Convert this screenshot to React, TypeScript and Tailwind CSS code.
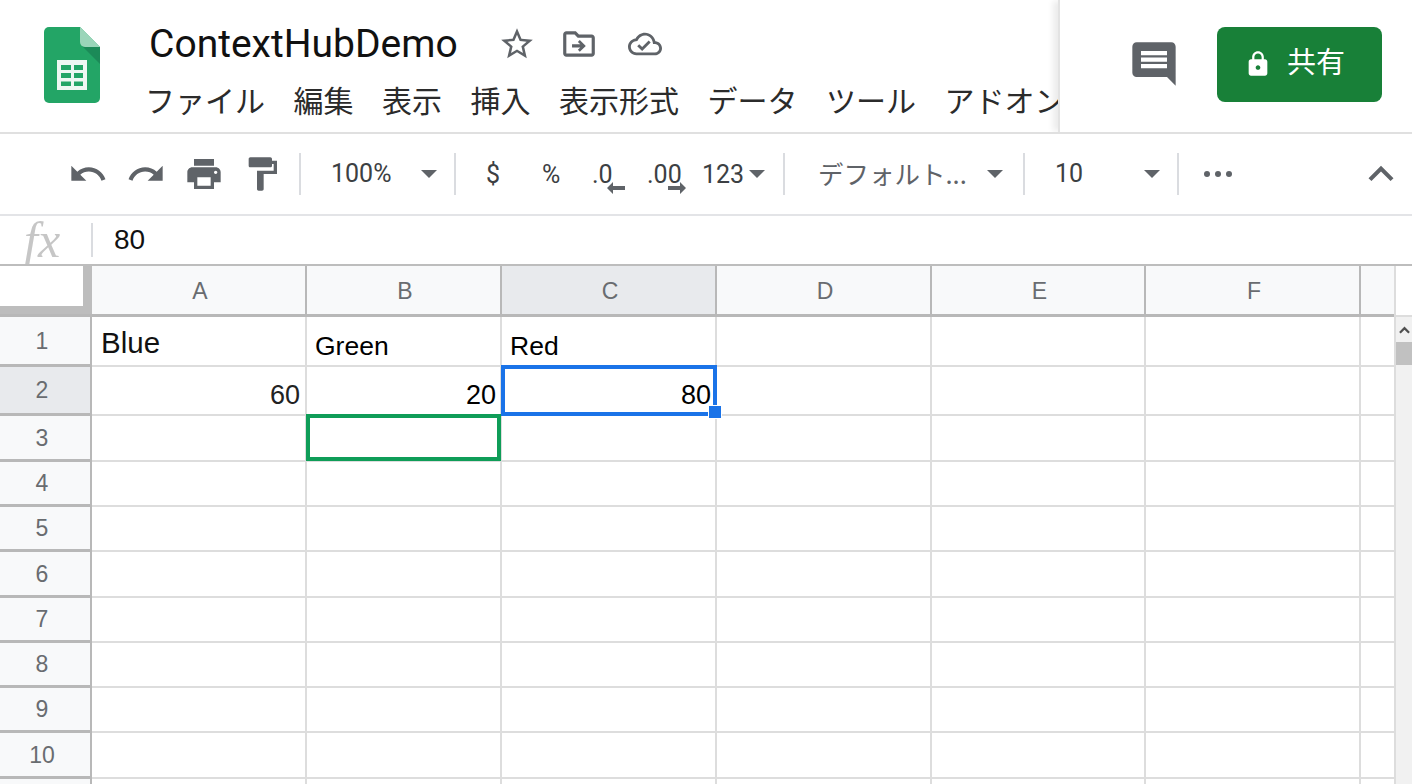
import React from "react";

const MENU = ["ファイル", "編集", "表示", "挿入", "表示形式", "データ", "ツール", "アドオン"];
const COLS = [
  { label: "A", w: "w-[215px]" },
  { label: "B", w: "w-[195px]" },
  { label: "C", w: "w-[215px]" },
  { label: "D", w: "w-[215px]" },
  { label: "E", w: "w-[214px]" },
  { label: "F", w: "w-[215px]" },
];
const ROW_HEIGHTS = [
  "h-[50px]", "h-[49px]", "h-[46px]", "h-[45px]", "h-[45px]",
  "h-[46px]", "h-[45px]", "h-[45px]", "h-[45px]", "h-[46px]", "h-[45px]",
];

const Icon: React.FC<{ d: string; className: string }> = ({ d, className }) => (
  <svg viewBox="0 0 24 24" className={className} fill="#5f6368">
    <path d={d} />
  </svg>
);

const Caret: React.FC = () => (
  <svg viewBox="0 0 16 8" className="w-4 h-2 shrink-0" fill="#5f6368">
    <path d="M0 0h16L8 8z" />
  </svg>
);

const Sep: React.FC = () => <div className="w-0.5 h-[42px] bg-[#dadce0] shrink-0" />;

const SheetsLogo: React.FC = () => (
  <svg viewBox="0 0 56 76" className="w-14 h-[76px]">
    <path d="M5 0H36L56 20V71a5 5 0 0 1-5 5H5a5 5 0 0 1-5-5V5a5 5 0 0 1 5-5z" fill="#23a566" />
    <path d="M39 20L56 37V20z" fill="#1c8a58" />
    <path d="M36 0L56 20H41a5 5 0 0 1-5-5z" fill="#9ad5b9" />
    <rect x="13" y="33" width="30" height="30" fill="#eef7f2" />
    <rect x="17" y="38" width="10" height="5" fill="#23a566" />
    <rect x="30" y="38" width="9" height="5" fill="#23a566" />
    <rect x="17" y="46" width="10" height="5" fill="#23a566" />
    <rect x="30" y="46" width="9" height="5" fill="#23a566" />
    <rect x="17" y="54.5" width="10" height="4.5" fill="#23a566" />
    <rect x="30" y="54.5" width="9" height="4.5" fill="#23a566" />
  </svg>
);

const Arrow: React.FC<{ left?: boolean; className: string }> = ({ left, className }) => (
  <svg viewBox="0 0 18 12" className={className} fill="#5f6368">
    {left ? <path d="M6 0v4h12v4H6v4L0 6z" /> : <path d="M12 0v4H0v4h12v4l6-6z" />}
  </svg>
);

function cellContent(row: number, col: number) {
  if (row === 0 && col === 0)
    return <span className="self-end pl-[9px] pb-0.5 text-[29.5px] leading-[40px] text-[#111]">Blue</span>;
  if (row === 0 && col === 1)
    return <span className="self-end pl-2 text-[26.5px] leading-[38px] text-black">Green</span>;
  if (row === 0 && col === 2)
    return <span className="self-end pl-2 text-[26.5px] leading-[38px] text-black">Red</span>;
  if (row === 1 && col === 0)
    return <span className="self-end ml-auto pr-[5px] text-[27px] leading-[38px] text-[#222]">60</span>;
  if (row === 1 && col === 1)
    return <span className="self-end ml-auto pr-1 text-[27px] leading-[38px] text-black">20</span>;
  if (row === 1 && col === 2)
    return <span className="self-end ml-auto pr-1 text-[27px] leading-[38px] text-black">80</span>;
  return null;
}

export default function App() {
  return (
    <div className="w-[1412px] h-[784px] overflow-hidden bg-white flex flex-col font-['Roboto','Noto_Sans_CJK_JP',sans-serif]">
      {/* Title bar */}
      <div className="h-[134px] shrink-0 flex border-b-2 border-[#e0e0e0] overflow-hidden">
        <div className="w-[1058px] shrink-0 flex overflow-hidden">
          <div className="pl-11 pt-[27px] w-[147px] shrink-0">
            <SheetsLogo />
          </div>
          <div className="flex flex-col min-w-0">
            <div className="flex items-center h-[62px] pt-[26px] pl-0.5">
              <span className="text-[39px] leading-[36px] text-[#111] w-[336px] shrink-0 whitespace-nowrap">ContextHubDemo</span>
              <Icon className="w-[38px] h-[38px] ml-[13px]" d="M22 9.24l-7.19-.62L12 2 9.19 8.63 2 9.24l5.46 4.73L5.82 21 12 17.27 18.18 21l-1.63-7.03L22 9.24zM12 15.4l-3.76 2.27 1-4.28-3.32-2.88 4.38-.38L12 6.1l1.71 4.04 4.38.38-3.32 2.88 1 4.28L12 15.4z" />
              <Icon className="w-[38px] h-[38px] ml-[24px]" d="M20 6h-8l-2-2H4c-1.1 0-2 .9-2 2v12c0 1.1.9 2 2 2h16c1.1 0 2-.9 2-2V8c0-1.1-.9-2-2-2zm0 12H4V6h5.17l2 2H20v10zM12.5 9.5l-1.2 1.2 1.5 1.5H7.6v2h5.2l-1.5 1.5 1.2 1.2 3.8-3.7z" />
              <Icon className="w-[34px] h-[34px] ml-[30px]" d="M19.35 10.04C18.67 6.59 15.64 4 12 4 9.11 4 6.6 5.64 5.35 8.04 2.34 8.36 0 10.91 0 14c0 3.31 2.69 6 6 6h13c2.76 0 5-2.24 5-5 0-2.64-2.05-4.78-4.65-4.96zM19 18H6c-2.21 0-4-1.79-4-4 0-2.05 1.53-3.76 3.56-3.97l1.07-.11.5-.95C8.08 7.14 9.94 6 12 6c2.62 0 4.88 1.86 5.39 4.43l.3 1.5 1.53.11c1.56.1 2.78 1.41 2.78 2.96 0 1.65-1.35 3-3 3zm-9-3.82l-2.09-2.09L6.5 13.5 10 17l6.01-6.01-1.41-1.41z" />
            </div>
            <div className="flex gap-[28.5px] mt-[15px] text-[30px] leading-[44px] text-[#2b2b2b] whitespace-nowrap font-['Noto_Sans_CJK_JP',sans-serif] font-normal -ml-0.5">
              {MENU.map((m) => (
                <span key={m}>{m}</span>
              ))}
            </div>
          </div>
        </div>
        <div className="flex-1 flex bg-white border-l-2 border-[#e3e3e3] shadow-[-6px_0_6px_-1px_rgba(0,0,0,0.08)] z-10">
          <Icon
            className="w-[52px] h-[52px] ml-[68px] mt-[38px] shrink-0"
            d="M21.99 4c0-1.1-.89-2-1.99-2H4c-1.1 0-2 .9-2 2v12c0 1.1.9 2 2 2h14l4 4-.01-18zM18 14H6v-2h12v2zm0-3H6V9h12v2zm0-3H6V6h12v2z"
          />
          <button className="ml-[37px] mt-[27px] w-[165px] h-[75px] rounded-lg bg-[#188038] flex items-center pl-[27px] gap-[15px] text-white text-[29px] font-['Noto_Sans_CJK_JP',sans-serif]">
            <svg viewBox="0 0 24 24" className="w-[28px] h-[28px] -mt-0.5" fill="#fff">
              <path d="M18 8h-1V6c0-2.76-2.24-5-5-5S7 3.24 7 6v2H6c-1.1 0-2 .9-2 2v10c0 1.1.9 2 2 2h12c1.1 0 2-.9 2-2V10c0-1.1-.9-2-2-2zm-6 9c-1.1 0-2-.9-2-2s.9-2 2-2 2 .9 2 2-.9 2-2 2zm3.1-9H8.9V6c0-1.71 1.39-3.1 3.1-3.1 1.71 0 3.1 1.39 3.1 3.1v2z" />
            </svg>
            <span className="leading-none -mt-2">共有</span>
          </button>
        </div>
      </div>

      {/* Toolbar */}
      <div className="h-[82px] shrink-0 flex items-center border-b-2 border-[#e3e4e7] pl-[68px] text-[#3c4043] text-[25px]">
        <Icon className="w-10 h-10 shrink-0" d="M12.5 8c-2.65 0-5.05.99-6.9 2.6L2 7v9h9l-3.62-3.62c1.39-1.16 3.16-1.88 5.12-1.88 3.54 0 6.55 2.31 7.6 5.5l2.37-.78C21.08 11.03 17.15 8 12.5 8z" />
        <Icon className="w-10 h-10 ml-[18px] shrink-0" d="M18.4 10.6C16.55 8.99 14.15 8 11.5 8c-4.65 0-8.58 3.03-9.96 7.22L3.9 16c1.05-3.19 4.05-5.5 7.6-5.5 1.95 0 3.73.72 5.12 1.88L13 16h9V7l-3.6 3.6z" />
        <Icon className="w-10 h-10 ml-[18px] shrink-0" d="M19 8H5c-1.66 0-3 1.34-3 3v6h4v4h12v-4h4v-6c0-1.66-1.34-3-3-3zm-3 11H8v-5h8v5zm3-7c-.55 0-1-.45-1-1s.45-1 1-1 1 .45 1 1-.45 1-1 1zm-1-9H6v4h12V3z" />
        <Icon className="w-10 h-10 ml-[18px] shrink-0" d="M18 4V3c0-.55-.45-1-1-1H5c-.55 0-1 .45-1 1v4c0 .55.45 1 1 1h12c.55 0 1-.45 1-1V6h1v4H9v11c0 .55.45 1 1 1h2c.55 0 1-.45 1-1v-9h8V4h-3z" />
        <div className="ml-[17px] flex items-center shrink-0"><Sep /></div>
        <span className="ml-[30px] w-[90px] shrink-0 -mt-px">100%</span>
        <Caret />
        <div className="ml-[17px] flex items-center shrink-0"><Sep /></div>
        <span className="ml-[30px] w-[56px] shrink-0 mt-0.5">$</span>
        <span className="w-[50px] shrink-0 mt-0.5">%</span>
        <div className="relative w-[55px] shrink-0 mt-0.5">
          .0
          <Arrow left className="absolute left-[15px] top-[26px] w-[18px] h-3" />
        </div>
        <div className="relative w-[55px] shrink-0 mt-0.5">
          .00
          <Arrow className="absolute left-[21px] top-[26px] w-[18px] h-3" />
        </div>
        <span className="w-[47px] shrink-0 mt-0.5">123</span>
        <div className="flex"><Caret /></div>
        <div className="ml-[18px] flex items-center shrink-0"><Sep /></div>
        <span className="ml-[33px] w-[169px] shrink-0 whitespace-nowrap text-[25.5px] text-[#5f6368] font-['Noto_Sans_CJK_JP',sans-serif] font-normal -mt-px">デフォルト...</span>
        <Caret />
        <div className="ml-[20px] flex items-center shrink-0"><Sep /></div>
        <span className="ml-[30px] w-[89px] shrink-0 -mt-px">10</span>
        <Caret />
        <div className="ml-[17px] flex items-center shrink-0"><Sep /></div>
        <div className="ml-[25px] flex gap-[5px] shrink-0">
          <div className="w-1.5 h-1.5 rounded-full bg-[#5f6368]" />
          <div className="w-1.5 h-1.5 rounded-full bg-[#5f6368]" />
          <div className="w-1.5 h-1.5 rounded-full bg-[#5f6368]" />
        </div>
        <Icon className="w-[50px] h-[50px] ml-[124px] shrink-0" d="M12 8l-6 6 1.41 1.41L12 10.83l4.59 4.58L18 14z" />
      </div>

      {/* Formula bar */}
      <div className="h-[48px] shrink-0 flex items-center">
        <div className="w-[92px] h-full flex shrink-0 items-center pl-6 font-['Liberation_Serif',serif] italic text-[50px] text-[#c6c6c6] leading-none -mt-px">
          fx
        </div>
        <div className="w-0.5 h-[34px] bg-[#dadce0] shrink-0 -ml-px" />
        <span className="ml-[21px] text-[28px] text-[#111] font-['Liberation_Sans',sans-serif]">80</span>
      </div>

      {/* Grid */}
      <div className="flex-1 min-h-0 flex border-t-2 border-[#bdbdbd] font-['Liberation_Sans',sans-serif]">
        <div className="w-[1394px] shrink-0 flex flex-col">
          <div className="h-[51px] shrink-0 flex border-b-[3px] border-[#b8b8b8] text-[23px] text-[#696c70]">
            <div className="w-[92px] shrink-0 bg-[#bdbdbd]">
              <div className="w-[83px] h-10 bg-white" />
            </div>
            {COLS.map((c) => (
              <div
                key={c.label}
                className={`${c.w} shrink-0 flex items-center justify-center border-r-2 border-[#b8b8b8] pl-[3px] pt-0.5 ${
                  c.label === "C" ? "bg-[#e8eaed]" : "bg-[#f8f9fa]"
                }`}
              >
                {c.label}
              </div>
            ))}
            <div className="flex-1 bg-[#f8f9fa]" />
          </div>
          {ROW_HEIGHTS.map((h, row) => (
            <div key={row} className={`${h} shrink-0 flex`}>
              <div
                className={`w-[92px] shrink-0 flex items-center justify-center border-r-2 border-b-[3px] border-[#b8b8b8] text-[23px] text-[#696c70] pr-1.5 pt-px ${
                  row === 1 ? "bg-[#e8eaed]" : "bg-[#f8f9fa]"
                }`}
              >
                {row + 1}
              </div>
              {COLS.map((c, col) => (
                <div
                  key={c.label}
                  className={`${c.w} shrink-0 relative flex border-r-2 border-b-2 border-[#dddddd]`}
                >
                  {cellContent(row, col)}
                  {row === 2 && col === 1 && (
                    <div className="absolute -left-px -top-0.5 -right-px -bottom-px border-4 border-[#0f9d58] z-10" />
                  )}
                  {row === 1 && col === 2 && (
                    <div className="absolute -left-px -top-0.5 -right-0.5 -bottom-0.5 border-4 border-[#1a73e8] z-20">
                      <div className="absolute -right-[9px] -bottom-[7px] w-[14px] h-[14px] bg-[#1a73e8] border border-white" />
                    </div>
                  )}
                </div>
              ))}
              <div className="flex-1 border-b-2 border-[#dddddd]" />
            </div>
          ))}
        </div>
        {/* Scrollbar */}
        <div className="flex-1 flex flex-col border-l-2 border-[#dddddd]">
          <div className="h-[51px] shrink-0 bg-white border-b-2 border-[#dddddd]" />
          <div className="h-[25px] shrink-0 bg-[#f1f1f1] flex justify-center items-center">
            <svg viewBox="0 0 12 8" className="w-[11px] h-[8px]" fill="none" stroke="#505050" strokeWidth="2.4">
              <path d="M1 7l5-5 5 5" />
            </svg>
          </div>
          <div className="h-[23px] shrink-0 bg-[#c1c1c1]" />
          <div className="flex-1 bg-[#f1f1f1]" />
        </div>
      </div>
    </div>
  );
}
